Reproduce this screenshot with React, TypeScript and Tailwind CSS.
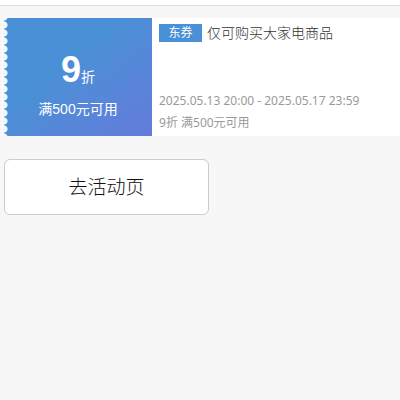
const coupon = {
  discount: "9",
  unit: "折",
  limit: "满500元可用",
  type: "东券",
  title: "仅可购买大家电商品",
  period: "2025.05.13 20:00 - 2025.05.17 23:59",
}

export default function App() {
  return (
    <div className="min-h-screen overflow-x-hidden bg-[#f7f7f7] font-['Noto_Sans','Noto_Sans_CJK_SC',sans-serif]">
      <header className="h-[6px] border-b border-[#e0e0e0] bg-white" />

      <main className="pt-3 pl-1">
        {/* Coupon */}
        <section className="flex h-[118px] bg-white">
          <div className="flex w-[148px] shrink-0 bg-linear-to-br from-[#4a90d6] from-40% to-[#637bdb] text-white font-['Liberation_Sans','Noto_Sans_CJK_SC',sans-serif]">
            {/* Perforated edge */}
            <div className="w-1 bg-[radial-gradient(circle_at_0_50%,#f0fbff_3px,transparent_4px)] bg-[length:4px_8px] bg-[position:0_3px]" />
            <div className="flex flex-1 flex-col items-center pt-8 pr-1">
              <p className="text-sm leading-10">
                <strong className="text-4xl leading-10 font-bold">{coupon.discount}</strong>
                {coupon.unit}
              </p>
              <p className="text-sm leading-6">{coupon.limit}</p>
            </div>
          </div>

          <div className="flex min-w-0 flex-1 flex-col justify-between pt-[3px] pb-[2px] pl-[7px]">
            <div className="flex items-center gap-[5px]">
              <span className="h-[18px] w-[43px] shrink-0 bg-[#4a90d6] text-center text-xs leading-[18px] text-white">
                {coupon.type}
              </span>
              <h1 className="text-sm leading-6 font-light whitespace-nowrap text-[#333]">{coupon.title}</h1>
            </div>
            <div className="text-xs leading-[22px] whitespace-nowrap text-[#999]">
              <p>{coupon.period}</p>
              <p>
                {coupon.discount}
                {coupon.unit} {coupon.limit}
              </p>
            </div>
          </div>
        </section>

        <button
          type="button"
          className="mt-[23px] h-14 w-[205px] rounded-md border border-[#ccc] bg-white text-[19px] font-light text-[#111]"
        >
          去活动页
        </button>
      </main>
    </div>
  )
}
